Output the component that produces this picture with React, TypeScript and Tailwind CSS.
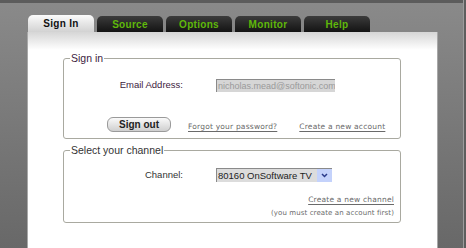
import React from 'react';

const tabs = ['Sign In', 'Source', 'Options', 'Monitor', 'Help'];

function Tab({ label, active }: { label: string; active: boolean }) {
  if (active) {
    return (
      <div className="w-[66px] h-[17px] rounded-t-[5px] bg-gradient-to-b from-[#fbfbfb] to-[#d2d2d2] flex items-center justify-center text-[10px] font-bold text-[#111] tracking-[0.3px]">
        {label}
      </div>
    );
  }
  return (
    <div className="w-[66px] h-[16px] rounded-t-[5px] bg-gradient-to-b from-[#3c3c3c] to-[#141414] flex items-center justify-center text-[10px] font-bold text-[#5fb80a] tracking-[0.3px]">
      {label}
    </div>
  );
}

const linkCls =
  "font-['DejaVu_Sans',sans-serif] text-[7.5px] tracking-[0.2px] text-[#6a6a6a] underline underline-offset-[2px] whitespace-nowrap";

export default function App() {
  return (
    <div className="w-[466px] h-[248px] flex bg-gradient-to-b from-[#8a8a8a] to-[#686868] font-['Liberation_Sans',Arial,sans-serif] overflow-hidden">
      <div className="w-[463px] flex flex-col border-t-[3px] border-[#5c5c5c]">
        <div className="flex gap-[3px] ml-[28px] mt-[12px]">
          {tabs.map((t, i) => (
            <div key={t} className="flex flex-col justify-end h-[17px]">
              <Tab label={t} active={i === 0} />
            </div>
          ))}
        </div>
        <div className="ml-[27px] w-[411px] flex-1 border-x border-[#a8a8a8]">
          <div className="h-full bg-gradient-to-b from-[#d6d6d6] via-white via-[18px] to-white pt-[20px]">
            <fieldset className="ml-[35px] w-[338px] min-w-0 h-[87px] border border-[#a9a9a0] rounded-[3px] px-[6px] m-0">
              <legend className="text-[10.5px] text-[#3d2240] px-[1px] leading-[12px]">Sign in</legend>
              <div className="flex items-center mt-[14px]">
                <div className="w-[113px] text-right text-[9.5px] text-[#3d2240] whitespace-nowrap">Email Address:</div>
                <div className="ml-[33px] w-[119px] h-[13px] bg-[#d6d6d6] border-t border-l border-[#8a8a8a] text-[9px] leading-[12px] text-[#9a9a9a] pl-[1px] overflow-hidden whitespace-nowrap">
                  nicholas.mead@softonic.com
                </div>
              </div>
              <div className="flex items-center mt-[25px]">
                <button className="ml-[37px] w-[64px] h-[15px] rounded-[6px] border border-[#9a9a9a] bg-gradient-to-b from-[#fafafa] to-[#cfcfcf] text-[10px] font-bold text-[#222] leading-[13px]">
                  Sign out
                </button>
                <span className={linkCls + ' ml-[17px] mt-[3px]'}>Forgot your password?</span>
                <span className={linkCls + ' ml-[22px] mt-[3px]'}>Create a new account</span>
              </div>
            </fieldset>
            <fieldset className="ml-[35px] mt-[5px] w-[338px] min-w-0 h-[79px] border border-[#a9a9a0] rounded-[3px] px-[6px] m-0">
              <legend className="text-[10.5px] text-[#333] px-[1px] leading-[12px]">Select your channel</legend>
              <div className="flex items-center mt-[12px]">
                <div className="w-[113px] text-right text-[9.5px] text-[#333]">Channel:</div>
                <div className="ml-[33px] w-[116px] h-[14px] flex bg-[#dcdcdc] border-t border-l border-[#8a8a8a]">
                  <div className="flex-1 text-[9.5px] leading-[13px] text-[#222] pl-[1px] whitespace-nowrap overflow-hidden">
                    80160 OnSoftware TV
                  </div>
                  <div className="w-[15px] h-full bg-[#c4d2fb] flex items-center justify-center">
                    <svg width="7" height="5" viewBox="0 0 7 5">
                      <path d="M1 1 L3.5 3.5 L6 1" stroke="#2a3a8a" strokeWidth="1.5" fill="none" />
                    </svg>
                  </div>
                </div>
              </div>
              <div className="flex flex-col items-end mt-[12px] gap-[2px]">
                <span className={linkCls}>Create a new channel</span>
                <span className="font-['DejaVu_Sans',sans-serif] text-[7px] tracking-[0.1px] text-[#6a6a6a] whitespace-nowrap">(you must create an account first)</span>
              </div>
            </fieldset>
          </div>
        </div>
      </div>
      <div className="w-[1px] bg-[#9c9c9c]" />
      <div className="w-[2px] bg-[#5e5e5e]" />
    </div>
  );
}
